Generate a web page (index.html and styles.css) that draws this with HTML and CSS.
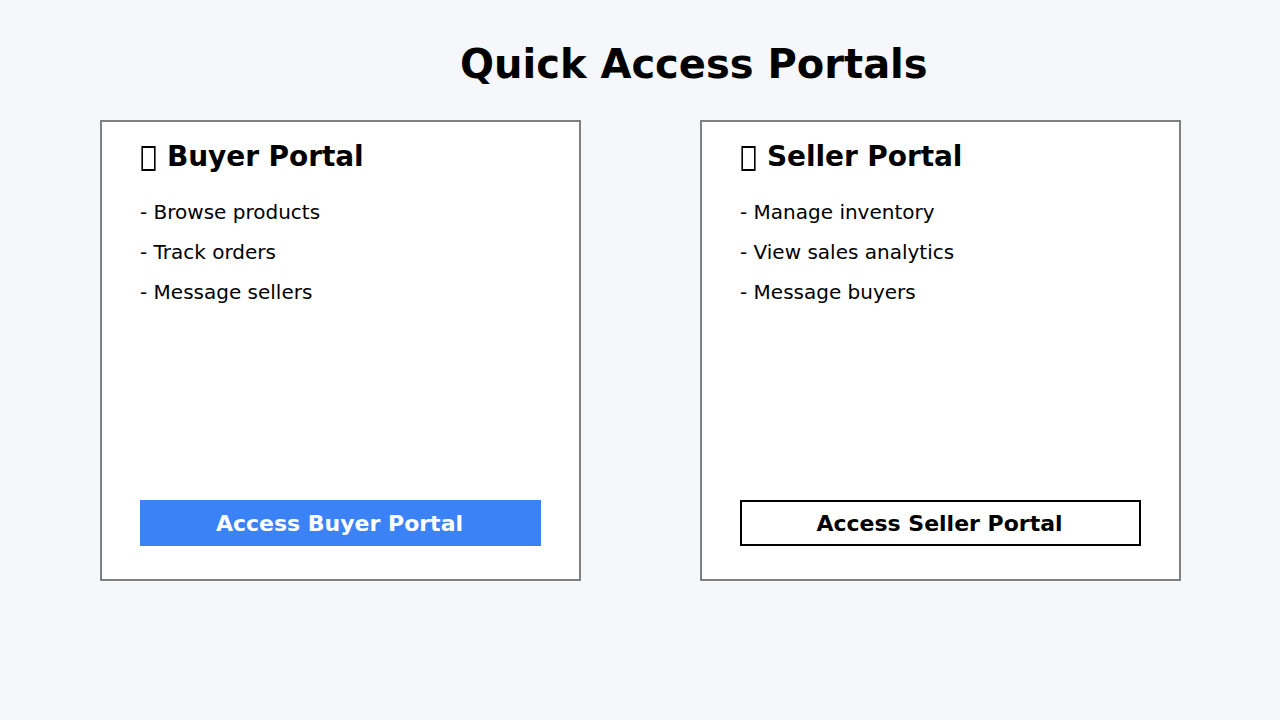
FILE: index.html
```html
<!DOCTYPE html>
<html lang="en">
<head>
<meta charset="utf-8">
<title>Quick Access Portals</title>
<link rel="stylesheet" href="styles.css">
</head>
<body>
<h1 class="title">Quick Access Portals</h1>
<main class="portals">
  <section class="card">
    <h2 class="heading"><svg class="glyph" width="16" height="28" viewBox="0 0 16 28"><path fill-rule="evenodd" d="M1.4 2H15.6V27H1.4ZM3 4V25H14V4Z"/></svg><span>Buyer Portal</span></h2>
    <ul class="features">
      <li>- Browse products</li>
      <li>- Track orders</li>
      <li>- Message sellers</li>
    </ul>
    <button class="button primary">Access Buyer Portal</button>
  </section>
  <section class="card">
    <h2 class="heading"><svg class="glyph" width="16" height="28" viewBox="0 0 16 28"><path fill-rule="evenodd" d="M1.4 2H15.6V27H1.4ZM3 4V25H14V4Z"/></svg><span>Seller Portal</span></h2>
    <ul class="features">
      <li>- Manage inventory</li>
      <li>- View sales analytics</li>
      <li>- Message buyers</li>
    </ul>
    <button class="button outline">Access Seller Portal</button>
  </section>
</main>
</body>
</html>
```
FILE: styles.css
```css
* { box-sizing: border-box; }
body {
  margin: 0;
  height: 720px;
  background: #f5f7fb;
  color: #000;
  font-family: "DejaVu Sans", sans-serif;
}
.title {
  margin: 0;
  padding: 41px 0 0 460px;
  height: 120px;
  font-size: 40px;
  line-height: 47px;
  font-weight: bold;
}
.portals {
  display: grid;
  grid-template-columns: 481px 481px;
  column-gap: 119px;
  padding-left: 100px;
}
.card {
  display: flex;
  flex-direction: column;
  height: 461px;
  padding: 18px 38px 33px;
  background: #fff;
  border: 2px solid gray;
}
.heading {
  display: flex;
  gap: 11px;
  margin: 0;
  height: 52px;
  font-size: 28px;
  line-height: 33px;
  letter-spacing: -0.08px;
  white-space: nowrap;
}
.glyph { margin-top: 4px; }
.features {
  margin: 0;
  padding: 0;
  list-style: none;
  font-size: 20px;
  line-height: 40px;
}
.button {
  width: 401px;
  height: 46px;
  margin-top: auto;
  padding: 2px 2px 0 0;
  border: 2px solid #3b82f6;
  font: bold 22px/40px "DejaVu Sans", sans-serif;
}
.primary { background: #3b82f6; color: #fff; }
.outline { background: #fff; border-color: #000; color: #000; }
```
